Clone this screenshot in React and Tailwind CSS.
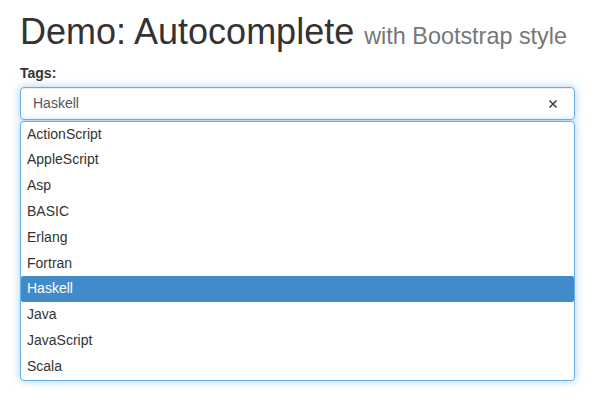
import React from "react";

const items = ["ActionScript", "AppleScript", "Asp", "BASIC", "Erlang", "Fortran", "Haskell", "Java", "JavaScript", "Scala"];

export default function App() {
  return (
    <div className="min-h-[407px] w-[597px] bg-white pl-[20px] pt-[12px] text-[14px] text-[#333]" style={{ fontFamily: '"Liberation Sans", Arial, sans-serif' }}>
      <h1 className="m-0 text-[36px] leading-[39.6px] font-normal text-[#333]">
        Demo: Autocomplete <small className="text-[23.4px] text-[#777]">with Bootstrap style</small>
      </h1>
      <div className="mt-[6px] text-[14px] font-bold leading-[20px]">Tags:</div>
      <div className="mt-[4px] w-[555px]">
        <div className="flex h-[33px] items-center justify-between rounded-[4px] border border-[#66afe9] pl-[12px] pr-[16px] text-[#555] shadow-[inset_0_1px_1px_rgba(0,0,0,0.075),0_0_8px_rgba(102,175,233,0.6)]">
          <span className="leading-[20px]">Haskell</span>
          <svg width="10" height="10" viewBox="0 0 10 10" className="mt-[1px]">
            <path d="M1.5 1.5 L8.5 8.5 M8.5 1.5 L1.5 8.5" stroke="#444" strokeWidth="1.6" strokeLinecap="butt" />
          </svg>
        </div>
        <div className="mt-[1px] rounded-[4px] border border-[#66afe9] bg-white shadow-[0_0_8px_rgba(102,175,233,0.6)]">
          {items.map((it) => (
            <div
              key={it}
              className={
                it === "Haskell"
                  ? "h-[25.8px] rounded-[2px] bg-[#428bca] pl-[6px] leading-[25.8px] text-white"
                  : "h-[25.8px] pl-[6px] leading-[25.8px] text-[#333]"
              }
            >
              {it}
            </div>
          ))}
        </div>
      </div>
    </div>
  );
}
